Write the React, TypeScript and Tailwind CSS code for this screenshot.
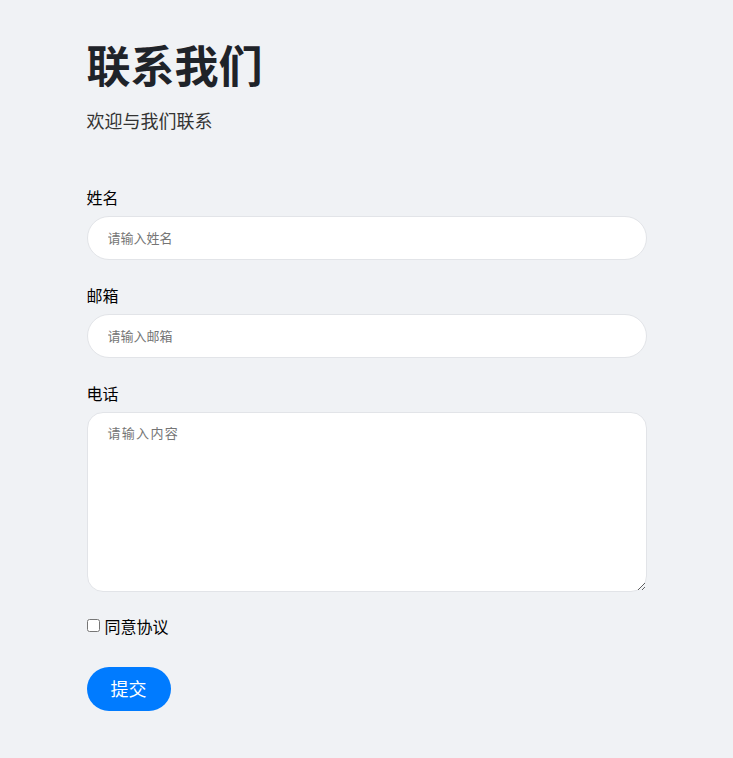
export default function App() {
  return (
    <div
      className="min-h-[758px] bg-[#f0f2f5] text-[#1f2329]"
      style={{ fontFamily: '"Noto Sans CJK SC", "Noto Sans", sans-serif' }}
    >
      <div className="mx-auto max-w-[560px] pt-[38px]">
        <h1 className="text-[44px] font-bold leading-[1.2] text-[#1f2329]">联系我们</h1>
        <p className="mt-[16px] text-[18px] leading-[27px] text-[#333]">欢迎与我们联系</p>

        <form className="mt-[51px]" onSubmit={(e) => e.preventDefault()}>
          <label className="block text-[16px] leading-[24px] text-black">姓名</label>
          <input
            type="text"
            placeholder="请输入姓名"
            className="mt-[7px] block h-[44px] w-full rounded-full border border-[#e2e4e8] bg-white px-[20px] text-[13px] outline-none placeholder:text-[#757575]"
          />

          <label className="mt-[23px] block text-[16px] leading-[24px] text-black">邮箱</label>
          <input
            type="email"
            placeholder="请输入邮箱"
            className="mt-[7px] block h-[44px] w-full rounded-full border border-[#e2e4e8] bg-white px-[20px] text-[13px] outline-none placeholder:text-[#757575]"
          />

          <label className="mt-[23px] block text-[16px] leading-[24px] text-black">电话</label>
          <textarea
            placeholder="请输入内容"
            className="mt-[7px] block h-[180px] w-full resize-y rounded-[16px] border border-[#e2e4e8] bg-white px-[20px] py-[10px] text-[13px] tracking-[0.1em] outline-none placeholder:text-[#757575]"
          />

          <label className="mt-[22px] flex items-center gap-[5px] text-[16px] leading-[24px] text-black">
            <input type="checkbox" className="h-[13px] w-[13px]" />
            同意协议
          </label>

          <button
            type="submit"
            className="mt-[29px] h-[44px] w-[84px] rounded-full bg-[#007bff] text-[18px] text-white"
          >
            提交
          </button>
        </form>
      </div>
    </div>
  );
}
